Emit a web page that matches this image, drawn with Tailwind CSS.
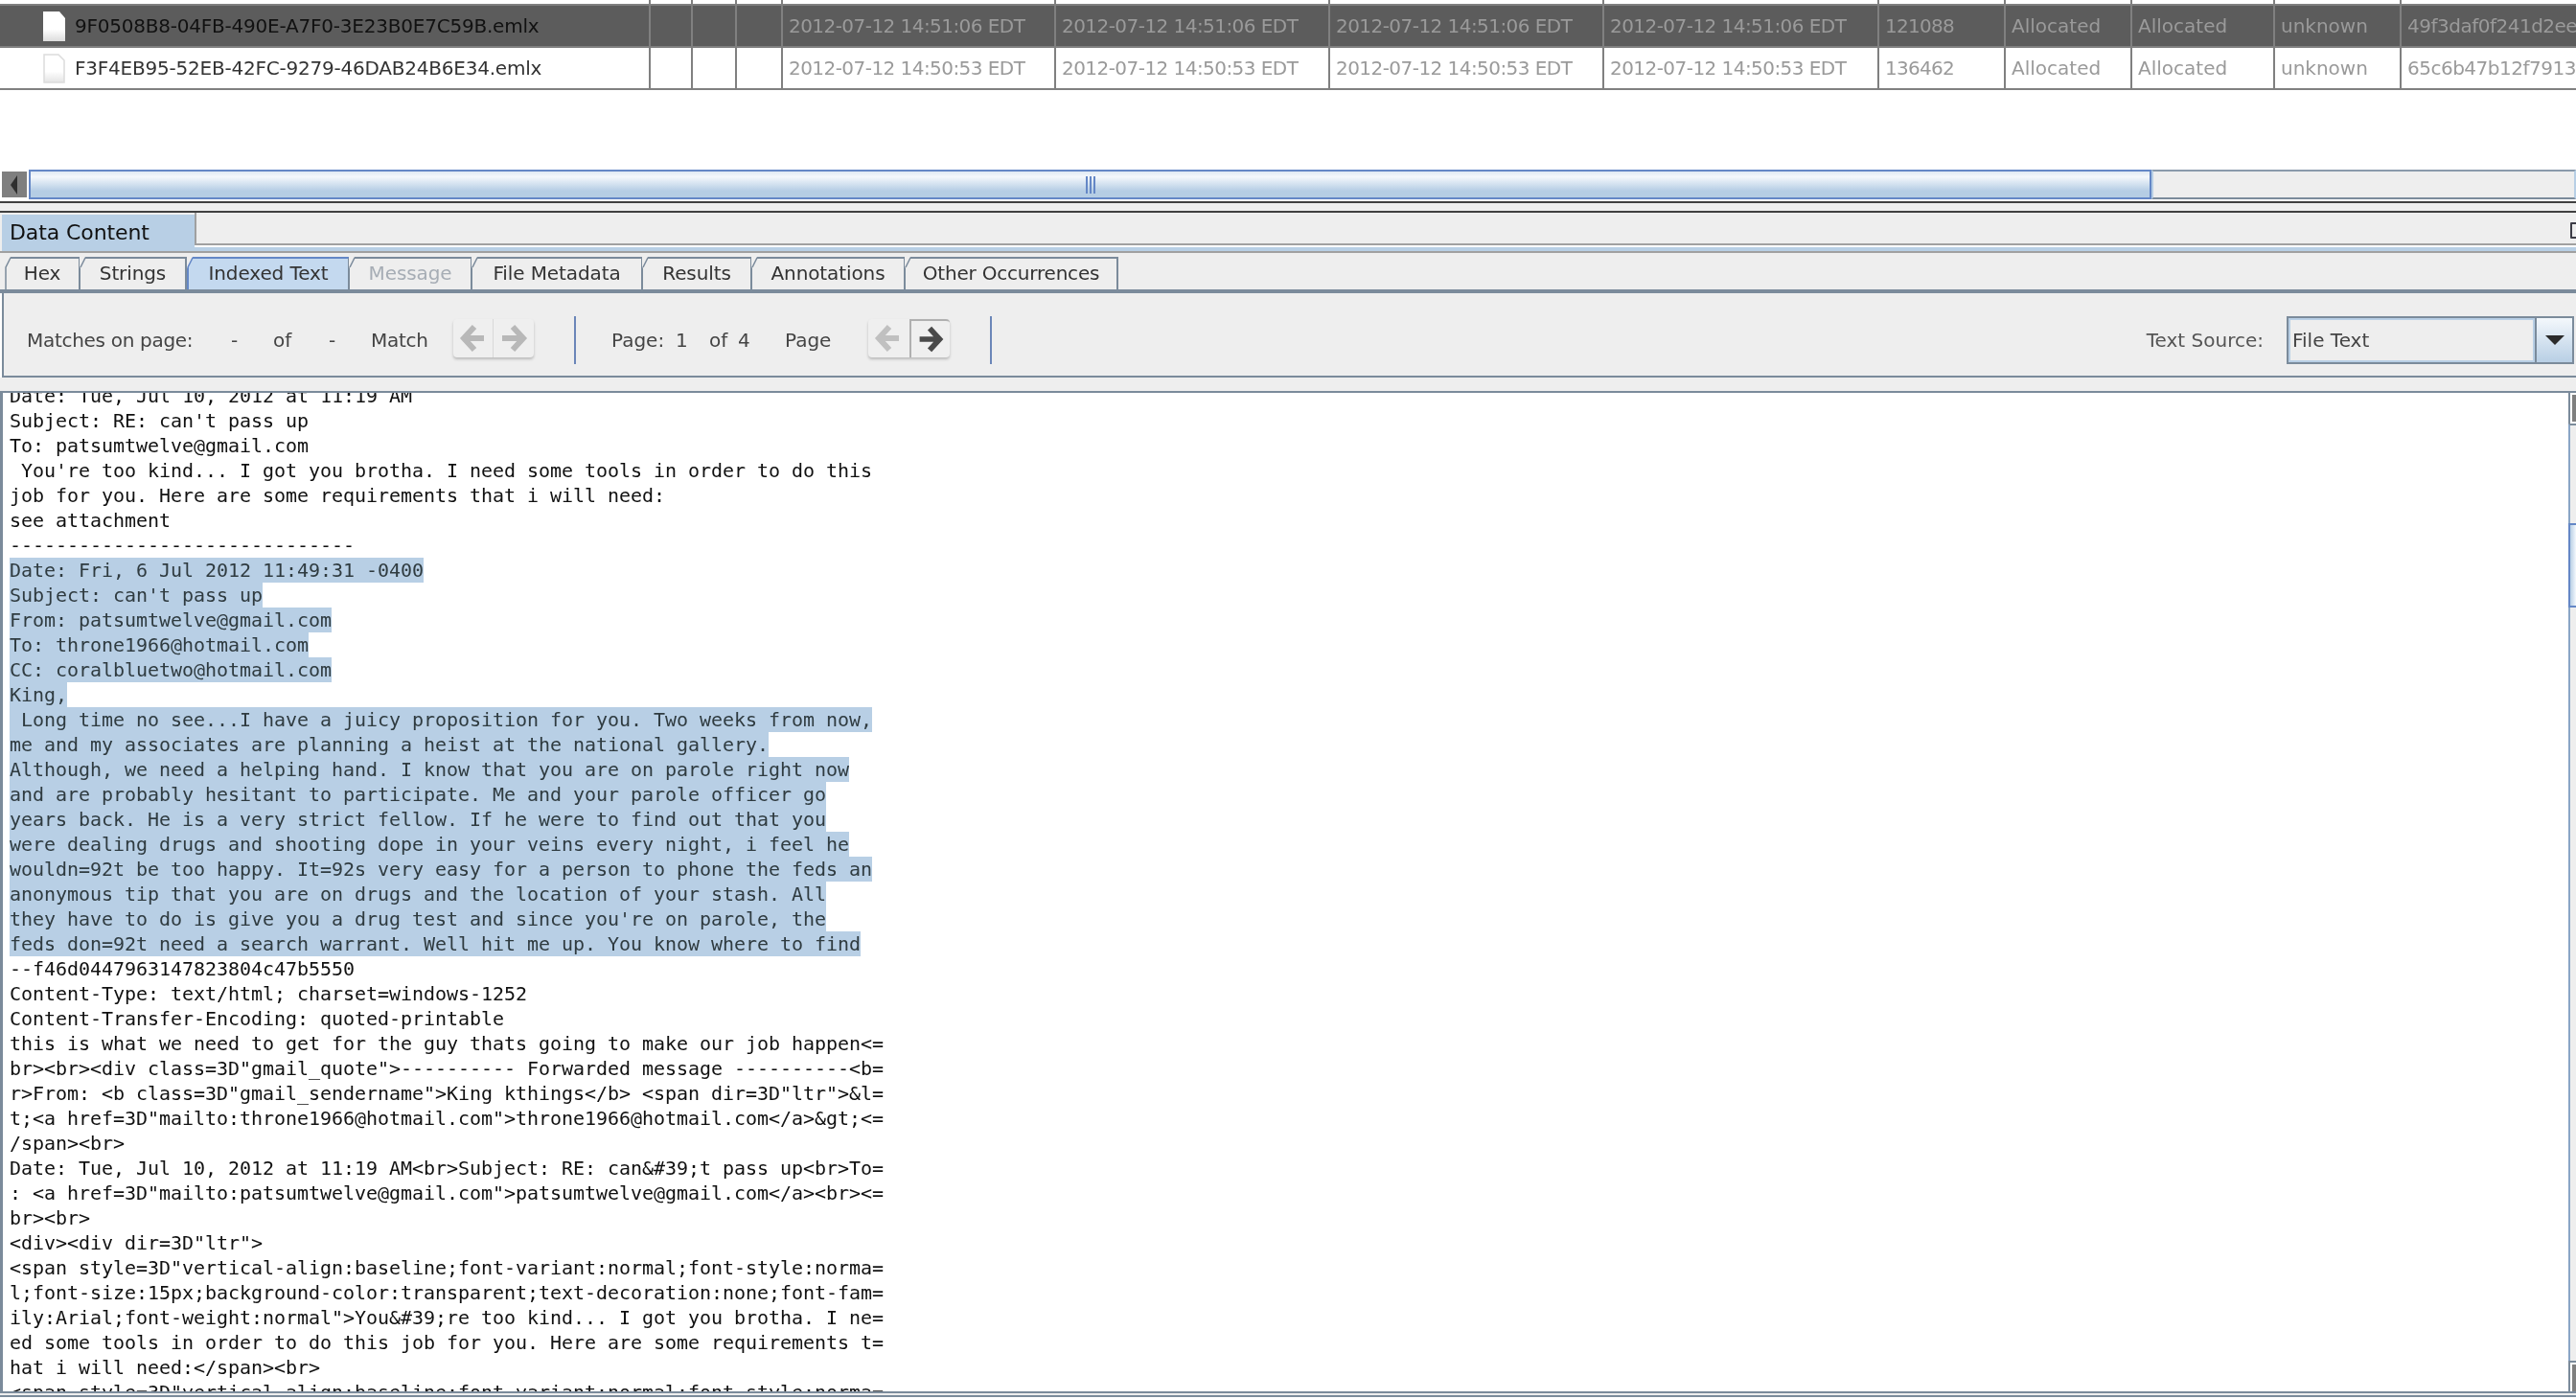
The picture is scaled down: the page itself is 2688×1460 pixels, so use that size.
<!DOCTYPE html>
<html lang="en">
<head>
  <meta charset="UTF-8" />
  <title>Data Content</title>
  <script src="https://cdn.jsdelivr.net/npm/@tailwindcss/browser@4"></script>
</head>
<body class="bg-white">
  <div class="w-[2688px] h-[1460px] flex flex-col overflow-hidden bg-white font-['DejaVu_Sans',sans-serif] text-[20px] text-[#333]">

    <!-- results table -->
    <div class="grid grid-cols-[679px_44px_46px_48px_285px_286px_286px_287px_132px_132px_149px_132px_182px] grid-rows-[6px_44px_44px] shrink-0 overflow-hidden whitespace-nowrap text-[#9a9a9a]">
      <!-- cut off row above -->
      <div class="border-r-2 border-b-2 border-[#808080]"></div><div class="border-r-2 border-b-2 border-[#808080]"></div><div class="border-r-2 border-b-2 border-[#808080]"></div><div class="border-r-2 border-b-2 border-[#808080]"></div><div class="border-r-2 border-b-2 border-[#808080]"></div><div class="border-r-2 border-b-2 border-[#808080]"></div><div class="border-r-2 border-b-2 border-[#808080]"></div><div class="border-r-2 border-b-2 border-[#808080]"></div><div class="border-r-2 border-b-2 border-[#808080]"></div><div class="border-r-2 border-b-2 border-[#808080]"></div><div class="border-r-2 border-b-2 border-[#808080]"></div><div class="border-r-2 border-b-2 border-[#808080]"></div><div class="border-b-2 border-[#808080]"></div>

      <!-- selected row -->
      <div class="bg-[#5c5c5c] border-r-2 border-b-2 border-[#808080] flex items-center pl-[45px] gap-[10px] text-[#111] tracking-[-0.22px] blur-[0.4px]">
        <svg class="w-[23px] h-[31px] shrink-0" viewBox="0 0 23 31"><defs><linearGradient id="docA" x1="0" y1="0" x2="0" y2="1"><stop offset="0.6" stop-color="#ffffff"/><stop offset="1" stop-color="#dcdcdc"/></linearGradient></defs><path d="M0 0H17L23 7V31H0Z" fill="url(#docA)"/></svg>
        <span>9F0508B8-04FB-490E-A7F0-3E23B0E7C59B.emlx</span>
      </div>
      <div class="bg-[#5c5c5c] border-r-2 border-b-2 border-[#808080]"></div>
      <div class="bg-[#5c5c5c] border-r-2 border-b-2 border-[#808080]"></div>
      <div class="bg-[#5c5c5c] border-r-2 border-b-2 border-[#808080]"></div>
      <div class="bg-[#5c5c5c] border-r-2 border-b-2 border-[#808080] flex items-center pl-[6px] tracking-[-0.55px] blur-[0.4px]">2012-07-12 14:51:06 EDT</div>
      <div class="bg-[#5c5c5c] border-r-2 border-b-2 border-[#808080] flex items-center pl-[6px] tracking-[-0.55px] blur-[0.4px]">2012-07-12 14:51:06 EDT</div>
      <div class="bg-[#5c5c5c] border-r-2 border-b-2 border-[#808080] flex items-center pl-[6px] tracking-[-0.55px] blur-[0.4px]">2012-07-12 14:51:06 EDT</div>
      <div class="bg-[#5c5c5c] border-r-2 border-b-2 border-[#808080] flex items-center pl-[6px] tracking-[-0.55px] blur-[0.4px]">2012-07-12 14:51:06 EDT</div>
      <div class="bg-[#5c5c5c] border-r-2 border-b-2 border-[#808080] flex items-center pl-[6px] tracking-[-0.7px] blur-[0.4px]">121088</div>
      <div class="bg-[#5c5c5c] border-r-2 border-b-2 border-[#808080] flex items-center pl-[6px] blur-[0.4px]">Allocated</div>
      <div class="bg-[#5c5c5c] border-r-2 border-b-2 border-[#808080] flex items-center pl-[6px] blur-[0.4px]">Allocated</div>
      <div class="bg-[#5c5c5c] border-r-2 border-b-2 border-[#808080] flex items-center pl-[6px] blur-[0.4px]">unknown</div>
      <div class="bg-[#5c5c5c] border-b-2 border-[#808080] flex items-center pl-[6px] tracking-[-0.5px] overflow-hidden blur-[0.4px]">49f3daf0f241d2ee</div>

      <!-- second row -->
      <div class="border-r-2 border-b-2 border-[#808080] flex items-center pl-[45px] gap-[10px] text-[#333] tracking-[-0.22px] blur-[0.4px]">
        <svg class="w-[23px] h-[31px] shrink-0" viewBox="0 0 23 31"><defs><linearGradient id="docB" x1="0" y1="0" x2="0" y2="1"><stop offset="0.6" stop-color="#ffffff"/><stop offset="1" stop-color="#e4e4e4"/></linearGradient></defs><path d="M1 1H16L22 7V30H1Z" fill="url(#docB)" stroke="#dcdcdc" stroke-width="1.5"/></svg>
        <span>F3F4EB95-52EB-42FC-9279-46DAB24B6E34.emlx</span>
      </div>
      <div class="border-r-2 border-b-2 border-[#808080]"></div>
      <div class="border-r-2 border-b-2 border-[#808080]"></div>
      <div class="border-r-2 border-b-2 border-[#808080]"></div>
      <div class="border-r-2 border-b-2 border-[#808080] flex items-center pl-[6px] tracking-[-0.55px] blur-[0.4px]">2012-07-12 14:50:53 EDT</div>
      <div class="border-r-2 border-b-2 border-[#808080] flex items-center pl-[6px] tracking-[-0.55px] blur-[0.4px]">2012-07-12 14:50:53 EDT</div>
      <div class="border-r-2 border-b-2 border-[#808080] flex items-center pl-[6px] tracking-[-0.55px] blur-[0.4px]">2012-07-12 14:50:53 EDT</div>
      <div class="border-r-2 border-b-2 border-[#808080] flex items-center pl-[6px] tracking-[-0.55px] blur-[0.4px]">2012-07-12 14:50:53 EDT</div>
      <div class="border-r-2 border-b-2 border-[#808080] flex items-center pl-[6px] tracking-[-0.7px] blur-[0.4px]">136462</div>
      <div class="border-r-2 border-b-2 border-[#808080] flex items-center pl-[6px] blur-[0.4px]">Allocated</div>
      <div class="border-r-2 border-b-2 border-[#808080] flex items-center pl-[6px] blur-[0.4px]">Allocated</div>
      <div class="border-r-2 border-b-2 border-[#808080] flex items-center pl-[6px] blur-[0.4px]">unknown</div>
      <div class="border-b-2 border-[#808080] flex items-center pl-[6px] tracking-[-0.5px] overflow-hidden blur-[0.4px]">65c6b47b12f7913b</div>
    </div>

    <div class="h-[83px] shrink-0"></div>

    <!-- horizontal scrollbar -->
    <div class="h-[31px] shrink-0 flex">
      <div class="w-[30px] shrink-0 border-2 border-white bg-[#7f7f7f] flex items-center justify-center">
        <svg class="w-[10px] h-[20px]" viewBox="0 0 10 20"><path d="M8 0V20L1 10Z" fill="#2f2f2f"/></svg>
      </div>
      <div class="w-[2215px] shrink-0 border-2 border-[#6487c6] bg-linear-to-b from-[#dfe9f3] via-[#f4f8fc] via-20% to-[#b5cde4] to-75% flex items-center justify-center">
        <div class="flex gap-[2px]">
          <div class="w-[2px] h-[18px] bg-[#6487c6]"></div>
          <div class="w-[2px] h-[18px] bg-[#6487c6]"></div>
          <div class="w-[2px] h-[18px] bg-[#6487c6]"></div>
        </div>
      </div>
      <div class="flex-1 border-y-2 border-x-2 border-t-[#8a9aab] border-b-[#7b8b9b] border-x-[#b8cfe5] bg-[#eeeeee]"></div>
    </div>

    <div class="h-[2px] shrink-0"></div>
    <div class="h-[2px] shrink-0 bg-[#404040]"></div>
    <div class="h-[8px] shrink-0 bg-[#eeeeee]"></div>
    <div class="h-[2px] shrink-0 bg-[#404040]"></div>

    <!-- Data Content header -->
    <div class="h-[40px] shrink-0 flex bg-[#eeeeee] pl-[2px] pt-[2px]">
      <div class="w-[201px] h-[38px] bg-[#b8cfe5] text-[#111] text-[22px] pl-[8px] pb-[2px] flex items-center tracking-[-0.1px] blur-[0.3px]">Data Content</div>
      <div class="flex-1 flex flex-col">
        <div class="h-[34px] -mt-[2px] border-l-2 border-b-2 border-[#a0a0a0] flex items-start pt-[10px]">
          <div class="ml-auto -mr-[11px] w-[17px] h-[17px] shrink-0 border-2 border-[#3c3c46] rounded-[1px]"></div>
        </div>
        <div class="h-[2px] bg-white"></div>
        <div class="flex-1 bg-[#b8cfe5]"></div>
      </div>
    </div>
    <div class="h-[2px] shrink-0 bg-[#a0a0a0]"></div>

    <!-- tabs -->
    <div class="h-[38px] shrink-0 flex items-end bg-[#eeeeee] pl-[6px] whitespace-nowrap tracking-[-0.1px]">
      <div class="relative w-[78px] h-[34px] pb-[2px] border-t-2 border-r-2 border-[#7b8b9b] flex items-center justify-center"><svg class="absolute -left-[1px] -top-[2px] w-[8px] h-[34px]" viewBox="0 0 8 34"><path d="M0 0H6L0 12Z" fill="#eeeeee"/><path d="M6 1L1 11V34" fill="none" stroke="#7b8b9b" stroke-width="1.5"/></svg><span class="blur-[0.3px]">Hex</span></div>
      <div class="relative w-[111px] h-[34px] pb-[2px] border-t-2 border-r-2 border-[#7b8b9b] flex items-center justify-center"><svg class="absolute -left-[1px] -top-[2px] w-[8px] h-[34px]" viewBox="0 0 8 34"><path d="M0 0H6L0 12Z" fill="#eeeeee"/><path d="M6 1L1 11" fill="none" stroke="#7b8b9b" stroke-width="1.5"/></svg><span class="blur-[0.3px]">Strings</span></div>
      <div class="relative w-[170px] h-[34px] pb-[2px] border-t-2 border-r-2 border-l-2 border-t-[#6487c6] border-r-[#7b8b9b] border-l-[#6487c6] bg-[#c4d9ef] flex items-center justify-center"><svg class="absolute -left-[2px] -top-[2px] w-[8px] h-[34px]" viewBox="0 0 8 34"><path d="M0 0H6L0 12Z" fill="#eeeeee"/><path d="M6 1L1 11" fill="none" stroke="#6487c6" stroke-width="1.5"/></svg><span class="blur-[0.3px]">Indexed Text</span></div>
      <div class="relative w-[128px] h-[34px] pb-[2px] border-t-2 border-r-2 border-[#7b8b9b] flex items-center justify-center text-[#a6adb5]"><svg class="absolute -left-[1px] -top-[2px] w-[8px] h-[34px]" viewBox="0 0 8 34"><path d="M0 0H6L0 12Z" fill="#eeeeee"/><path d="M6 1L1 11" fill="none" stroke="#7b8b9b" stroke-width="1.5"/></svg><span class="blur-[0.3px]">Message</span></div>
      <div class="relative w-[178px] h-[34px] pb-[2px] border-t-2 border-r-2 border-[#7b8b9b] flex items-center justify-center"><svg class="absolute -left-[1px] -top-[2px] w-[8px] h-[34px]" viewBox="0 0 8 34"><path d="M0 0H6L0 12Z" fill="#eeeeee"/><path d="M6 1L1 11" fill="none" stroke="#7b8b9b" stroke-width="1.5"/></svg><span class="blur-[0.3px]">File Metadata</span></div>
      <div class="relative w-[114px] h-[34px] pb-[2px] border-t-2 border-r-2 border-[#7b8b9b] flex items-center justify-center"><svg class="absolute -left-[1px] -top-[2px] w-[8px] h-[34px]" viewBox="0 0 8 34"><path d="M0 0H6L0 12Z" fill="#eeeeee"/><path d="M6 1L1 11" fill="none" stroke="#7b8b9b" stroke-width="1.5"/></svg><span class="blur-[0.3px]">Results</span></div>
      <div class="relative w-[160px] h-[34px] pb-[2px] border-t-2 border-r-2 border-[#7b8b9b] flex items-center justify-center"><svg class="absolute -left-[1px] -top-[2px] w-[8px] h-[34px]" viewBox="0 0 8 34"><path d="M0 0H6L0 12Z" fill="#eeeeee"/><path d="M6 1L1 11" fill="none" stroke="#7b8b9b" stroke-width="1.5"/></svg><span class="blur-[0.3px]">Annotations</span></div>
      <div class="relative w-[222px] h-[34px] pb-[2px] border-t-2 border-r-2 border-[#7b8b9b] flex items-center justify-center"><svg class="absolute -left-[1px] -top-[2px] w-[8px] h-[34px]" viewBox="0 0 8 34"><path d="M0 0H6L0 12Z" fill="#eeeeee"/><path d="M6 1L1 11" fill="none" stroke="#7b8b9b" stroke-width="1.5"/></svg><span class="blur-[0.3px] tracking-[-0.2px]">Other Occurrences</span></div>
    </div>
    <div class="h-[4px] shrink-0 bg-[#7b8b9b]"></div>

    <!-- toolbar -->
    <div class="h-[88px] shrink-0 bg-[#eeeeee] border-l-[2px] border-b-2 border-l-[#7b8b9b] border-b-[#7b8b9b] ml-[2px] pt-[12px] flex items-center whitespace-nowrap text-[#444]">
      <span class="w-[24px] shrink-0"></span>
      <span class="w-[213px] shrink-0 tracking-[-0.3px] blur-[0.3px]">Matches on page:</span>
      <span class="w-[44px] shrink-0 blur-[0.3px]">-</span>
      <span class="w-[58px] shrink-0 blur-[0.3px]">of</span>
      <span class="w-[44px] shrink-0 blur-[0.3px]">-</span>
      <span class="w-[86px] shrink-0 tracking-[-0.3px] blur-[0.3px]">Match</span>

      <div class="w-[84px] h-[40px] shrink-0 mb-[4px] flex rounded-[4px] bg-[#efefef] shadow-[0_2px_3px_rgba(0,0,0,0.22)]">
        <div class="w-[42px] border-r border-[#d8d8d8]">
          <svg class="w-[42px] h-[40px] blur-[0.7px]" viewBox="0 0 42 40"><path d="M22 8L11 20L22 32M11 20H32" fill="none" stroke="#b8b8b8" stroke-width="6"/></svg>
        </div>
        <div class="w-[42px]">
          <svg class="w-[42px] h-[40px] blur-[0.7px]" viewBox="0 0 42 40"><path d="M20 8L31 20L20 32M31 20H9" fill="none" stroke="#b8b8b8" stroke-width="6"/></svg>
        </div>
      </div>

      <span class="w-[42px] shrink-0"></span>
      <div class="w-[2px] h-[50px] shrink-0 bg-[#6b86b8]"></div>
      <span class="w-[37px] shrink-0"></span>
      <span class="w-[67px] shrink-0 blur-[0.3px]">Page:</span>
      <span class="w-[35px] shrink-0 blur-[0.3px]">1</span>
      <span class="w-[30px] shrink-0 blur-[0.3px]">of</span>
      <span class="w-[49px] shrink-0 blur-[0.3px]">4</span>
      <span class="w-[87px] shrink-0 blur-[0.3px]">Page</span>

      <div class="w-[85px] h-[40px] shrink-0 mb-[4px] flex rounded-[4px] bg-[#efefef] shadow-[0_2px_3px_rgba(0,0,0,0.22)]">
        <div class="w-[43px]">
          <svg class="w-[42px] h-[40px] blur-[0.7px]" viewBox="0 0 42 40"><path d="M22 8L11 20L22 32M11 20H32" fill="none" stroke="#c0c0c0" stroke-width="6"/></svg>
        </div>
        <div class="w-[42px] border-l-2 border-t-2 border-[#b0b0b0] rounded-tr-[4px]">
          <svg class="w-[40px] h-[38px] blur-[0.7px]" viewBox="0 0 42 40"><path d="M20 8L31 20L20 32M31 20H9" fill="none" stroke="#4a4a4a" stroke-width="6"/></svg>
        </div>
      </div>

      <span class="w-[42px] shrink-0"></span>
      <div class="w-[2px] h-[50px] shrink-0 bg-[#6b86b8]"></div>

      <span class="ml-auto mr-[24px] text-[#555] blur-[0.3px]">Text Source:</span>
      <div class="w-[300px] h-[50px] shrink-0 mr-[2px] flex border-2 border-[#7b8b9b]">
        <div class="flex-1 border-2 border-[#b8cfe5] bg-[#eeeeee] flex items-center pl-[2px] blur-[0.3px]">File Text</div>
        <div class="w-[39px] shrink-0 border-l-2 border-[#7b8b9b] bg-linear-to-b from-[#f4f8fc] to-[#b8cfe5] flex items-center justify-center">
          <svg class="w-[20px] h-[10px]" viewBox="0 0 20 10"><path d="M0 0H20L10 10Z" fill="#2b2b2b"/></svg>
        </div>
      </div>
    </div>

    <div class="h-[14px] shrink-0 bg-[#eeeeee]"></div>
    <div class="h-[2px] shrink-0 bg-[#7b8b9b]"></div>

    <!-- message text -->
    <div class="h-[1042px] shrink-0 flex border-l-[3px] border-[#7b8b9b]">
      <div class="flex-1 overflow-hidden pl-[7px] font-['DejaVu_Sans_Mono',monospace] text-[20px] leading-[26px] tracking-[-0.04px] text-[#111]">
        <div class="-mt-[10px] blur-[0.35px] *:whitespace-pre *:h-[26px]">
          <div>Date: Tue, Jul 10, 2012 at 11:19 AM</div>
          <div>Subject: RE: can't pass up</div>
          <div>To: patsumtwelve@gmail.com</div>
          <div> You're too kind... I got you brotha. I need some tools in order to do this</div>
          <div>job for you. Here are some requirements that i will need:</div>
          <div>see attachment</div>
          <div>------------------------------</div>
          <div><span class="inline-block h-[26px] bg-[#b8cfe5] text-[#2f3b40]">Date: Fri, 6 Jul 2012 11:49:31 -0400</span></div>
          <div><span class="inline-block h-[26px] bg-[#b8cfe5] text-[#2f3b40]">Subject: can't pass up</span></div>
          <div><span class="inline-block h-[26px] bg-[#b8cfe5] text-[#2f3b40]">From: patsumtwelve@gmail.com</span></div>
          <div><span class="inline-block h-[26px] bg-[#b8cfe5] text-[#2f3b40]">To: throne1966@hotmail.com</span></div>
          <div><span class="inline-block h-[26px] bg-[#b8cfe5] text-[#2f3b40]">CC: coralbluetwo@hotmail.com</span></div>
          <div><span class="inline-block h-[26px] bg-[#b8cfe5] text-[#2f3b40]">King,</span></div>
          <div><span class="inline-block h-[26px] bg-[#b8cfe5] text-[#2f3b40]"> Long time no see...I have a juicy proposition for you. Two weeks from now,</span></div>
          <div><span class="inline-block h-[26px] bg-[#b8cfe5] text-[#2f3b40]">me and my associates are planning a heist at the national gallery.</span></div>
          <div><span class="inline-block h-[26px] bg-[#b8cfe5] text-[#2f3b40]">Although, we need a helping hand. I know that you are on parole right now</span></div>
          <div><span class="inline-block h-[26px] bg-[#b8cfe5] text-[#2f3b40]">and are probably hesitant to participate. Me and your parole officer go</span></div>
          <div><span class="inline-block h-[26px] bg-[#b8cfe5] text-[#2f3b40]">years back. He is a very strict fellow. If he were to find out that you</span></div>
          <div><span class="inline-block h-[26px] bg-[#b8cfe5] text-[#2f3b40]">were dealing drugs and shooting dope in your veins every night, i feel he</span></div>
          <div><span class="inline-block h-[26px] bg-[#b8cfe5] text-[#2f3b40]">wouldn=92t be too happy. It=92s very easy for a person to phone the feds an</span></div>
          <div><span class="inline-block h-[26px] bg-[#b8cfe5] text-[#2f3b40]">anonymous tip that you are on drugs and the location of your stash. All</span></div>
          <div><span class="inline-block h-[26px] bg-[#b8cfe5] text-[#2f3b40]">they have to do is give you a drug test and since you're on parole, the</span></div>
          <div><span class="inline-block h-[26px] bg-[#b8cfe5] text-[#2f3b40]">feds don=92t need a search warrant. Well hit me up. You know where to find</span></div>
          <div>--f46d0447963147823804c47b5550</div>
          <div>Content-Type: text/html; charset=windows-1252</div>
          <div>Content-Transfer-Encoding: quoted-printable</div>
          <div>this is what we need to get for the guy thats going to make our job happen&lt;=</div>
          <div>br&gt;&lt;br&gt;&lt;div class=3D"gmail_quote"&gt;---------- Forwarded message ----------&lt;b=</div>
          <div>r&gt;From: &lt;b class=3D"gmail_sendername"&gt;King kthings&lt;/b&gt; &lt;span dir=3D"ltr"&gt;&amp;l=</div>
          <div>t;&lt;a href=3D"mailto:throne1966@hotmail.com"&gt;throne1966@hotmail.com&lt;/a&gt;&amp;gt;&lt;=</div>
          <div>/span&gt;&lt;br&gt;</div>
          <div>Date: Tue, Jul 10, 2012 at 11:19 AM&lt;br&gt;Subject: RE: can&amp;#39;t pass up&lt;br&gt;To=</div>
          <div>: &lt;a href=3D"mailto:patsumtwelve@gmail.com"&gt;patsumtwelve@gmail.com&lt;/a&gt;&lt;br&gt;&lt;=</div>
          <div>br&gt;&lt;br&gt;</div>
          <div>&lt;div&gt;&lt;div dir=3D"ltr"&gt;</div>
          <div>&lt;span style=3D"vertical-align:baseline;font-variant:normal;font-style:norma=</div>
          <div>l;font-size:15px;background-color:transparent;text-decoration:none;font-fam=</div>
          <div>ily:Arial;font-weight:normal"&gt;You&amp;#39;re too kind... I got you brotha. I ne=</div>
          <div>ed some tools in order to do this job for you. Here are some requirements t=</div>
          <div>hat i will need:&lt;/span&gt;&lt;br&gt;</div>
          <div>&lt;span style=3D"vertical-align:baseline;font-variant:normal;font-style:norma=</div>
        </div>
      </div>

      <!-- vertical scrollbar -->
      <div class="w-[8px] shrink-0 flex flex-col">
        <div class="h-[32px] border-l-2 border-[#7b8b9b] pl-[2px] pt-[2px] bg-white"><div class="h-[28px] bg-[#7f7f7f]"></div></div>
        <div class="h-[104px] border-l-2 border-t-2 border-l-[#8aa5c6] border-t-[#7b8b9b] bg-[#eeeeee]"></div>
        <div class="h-[88px] border-l-2 border-y-2 border-[#6487c6] bg-linear-to-r from-[#b8cfe5] to-[#f4f8fc]"></div>
        <div class="flex-1 border-l-2 border-[#8aa5c6] bg-[#eeeeee]"></div>
        <div class="h-[32px] border-l-2 border-t-2 border-l-[#7b8b9b] border-t-[#7b8b9b] pl-[2px] pt-[2px] bg-white"><div class="h-[28px] bg-[#7f7f7f]"></div></div>
      </div>
    </div>

    <div class="h-[2px] shrink-0 bg-[#7b8b9b]"></div>
    <div class="h-[2px] shrink-0 bg-[#eeeeee]"></div>
    <div class="h-[2px] shrink-0 bg-[#7b8b9b]"></div>
  </div>
</body>
</html>
